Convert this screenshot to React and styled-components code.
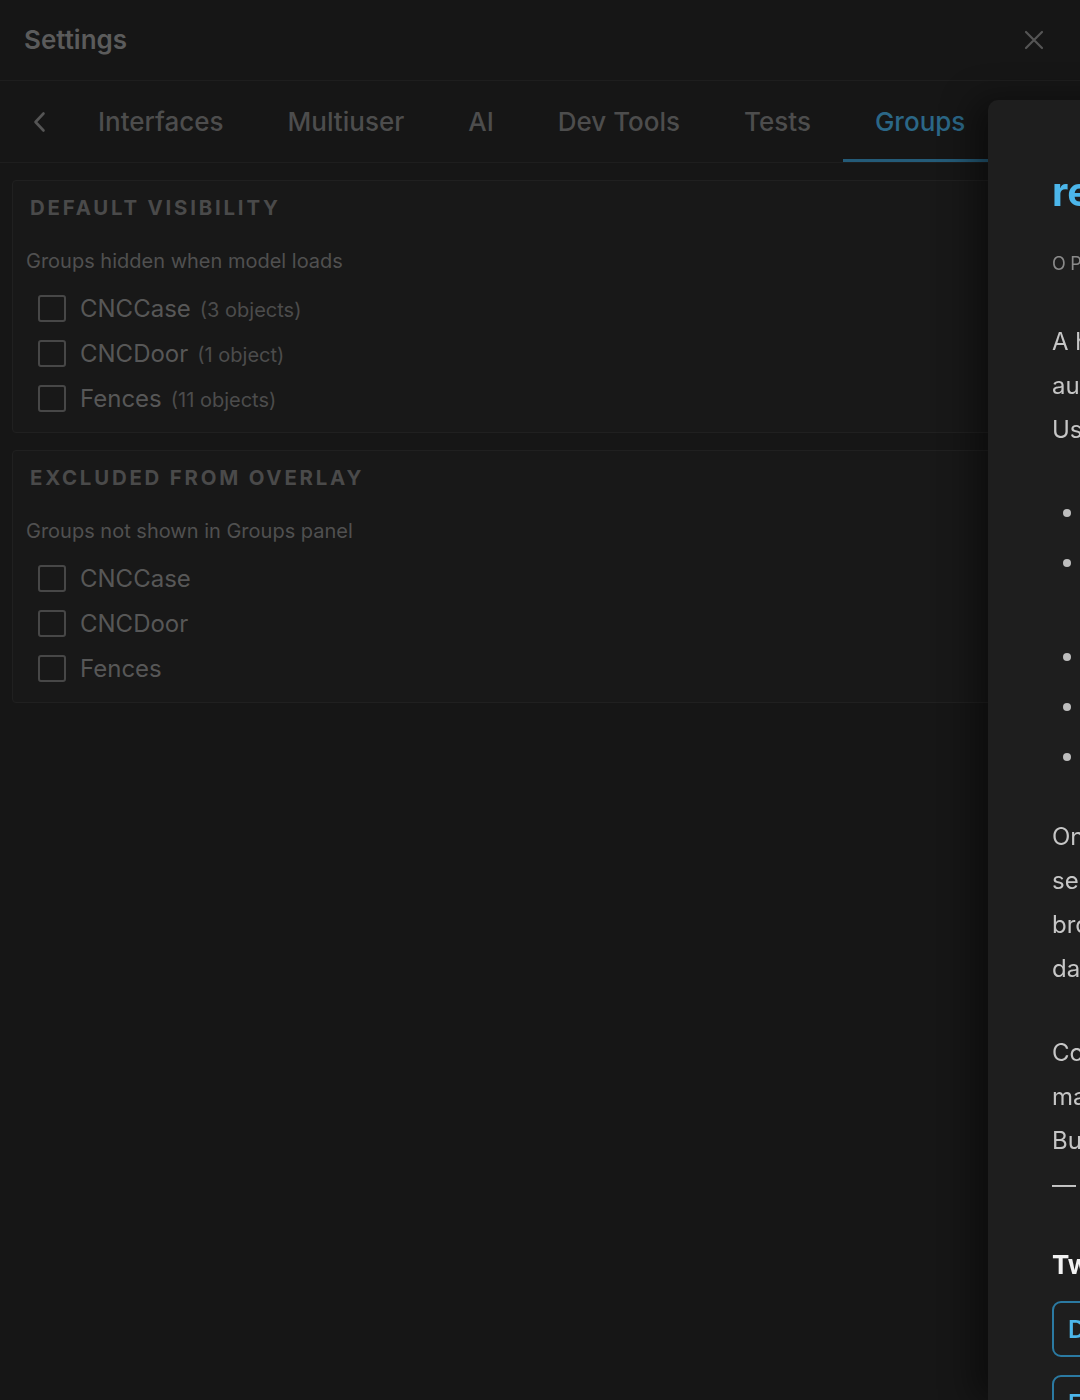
import React from "react";
import styled, { createGlobalStyle } from "styled-components";

const Global = createGlobalStyle`
  html, body { margin: 0; padding: 0; background: #161616; overflow: hidden; }
  body { font-family: Inter, "Noto Sans", "Liberation Sans", sans-serif; }
  * { box-sizing: border-box; }
`;

const Page = styled.div`
  width: 1080px;
  height: 1400px;
  background: #161616;
  display: flex;
  flex-direction: column;
`;

const Header = styled.header`
  height: 81px;
  border-bottom: 1px solid #1e1e1e;
  display: flex;
  align-items: center;
  justify-content: space-between;
  padding: 0 32px 0 24px;
`;

const Title = styled.h1`
  margin: 0;
  font-size: 26px;
  font-weight: 600;
  color: #5b5b5b;
  line-height: 1;
`;

const IconButton = styled.button`
  background: none;
  border: 0;
  padding: 0;
  display: flex;
  align-items: center;
  justify-content: ${(p) => (p.$start ? "flex-start" : "center")};
  padding-left: ${(p) => p.$pl || 0}px;
  align-self: center;
  width: ${(p) => p.$w || 28}px;
  height: 28px;
  color: #555;
`;

const TabBar = styled.nav`
  height: 82px;
  border-bottom: 1px solid #1e1e1e;
  display: flex;
  align-items: stretch;
  padding-left: 20px;
`;

const Tab = styled.div`
  display: flex;
  align-items: center;
  padding: 3px 32px 0;
  font-size: 26px;
  font-weight: 500;
  color: ${(p) => (p.$active ? "#2b6787" : "#4d4d4d")};
  border-bottom: 3px solid ${(p) => (p.$active ? "#245b78" : "transparent")};
`;

const Body = styled.main`
  display: flex;
  flex-direction: column;
  gap: 17px;
  padding: 17px 12px;
`;

const Card = styled.section`
  background: #181818;
  border: 1px solid #202020;
  border-radius: 4px;
  padding: 13px 14px 11px 13px;
`;

const CardTitle = styled.h2`
  margin: 0 0 0 4px;
  font-size: 20.4px;
  line-height: 28px;
  font-weight: 700;
  letter-spacing: 2.8px;
  text-transform: uppercase;
  color: #4a4a4a;
`;

const CardHint = styled.p`
  margin: 27px 0 13px;
  font-size: 20px;
  line-height: 24px;
  color: #505050;
`;

const Rows = styled.div`
  display: flex;
  flex-direction: column;
  padding-left: 12px;
`;

const Row = styled.label`
  display: flex;
  align-items: center;
  gap: 14px;
  height: 45px;
`;

const Box = styled.span`
  width: 28px;
  height: 27px;
  border: 2px solid #474747;
  border-radius: 3px;
  flex: none;
`;

const Name = styled.span`
  font-size: 24px;
  color: #575757;
`;

const Count = styled.span`
  font-size: 20px;
  color: #4c4c4c;
  margin-left: 9px;
`;

const Drawer = styled.aside`
  position: fixed;
  top: 100px;
  left: 988px;
  width: 640px;
  bottom: 0;
  background: #1e1e1e;
  border-top-left-radius: 10px;
  box-shadow: -14px 0 34px rgba(0, 0, 0, 0.45);
  padding: 70px 0 0 64px;
  overflow: hidden;
`;

const DrawerTitle = styled.h2`
  margin: 0;
  font-size: 40px;
  line-height: 44px;
  font-weight: 700;
  color: #4cb6ea;
`;

const Eyebrow = styled.div`
  margin-top: 38px;
  font-size: 18px;
  line-height: 24px;
  letter-spacing: 4.5px;
  text-transform: uppercase;
  color: #8a8a8a;
`;

const Para = styled.p`
  margin: ${(p) => p.$top || 40}px 0 0;
  font-size: 24px;
  line-height: 44px;
  color: #c6c6c6;
  white-space: nowrap;
`;

const List = styled.ul`
  margin: 38px 0 0;
  padding-left: 33px;
  font-size: 24px;
  line-height: 44px;
  color: #c6c6c6;
  white-space: nowrap;
  li { margin-bottom: 6px; }
  li::marker { color: #bdbdbd; }
`;

const SubHead = styled.h3`
  margin: 42px 0 0;
  font-size: 26px;
  line-height: 32px;
  font-weight: 700;
  color: #f2f2f2;
`;

const Buttons = styled.div`
  display: flex;
  flex-direction: column;
  gap: 18px;
  margin-top: 20px;
`;

const DrawerButton = styled.div`
  width: 420px;
  height: 56px;
  border: 2px solid #2b7aa2;
  border-radius: 9px;
  display: flex;
  align-items: center;
  padding-left: 14px;
  font-size: 24px;
  font-weight: 600;
  color: #4cb6ea;
`;

const groups = [
  { name: "CNCCase", count: "(3 objects)" },
  { name: "CNCDoor", count: "(1 object)" },
  { name: "Fences", count: "(11 objects)" },
];

const tabs = ["Interfaces", "Multiuser", "AI", "Dev Tools", "Tests", "Groups"];

export default function App() {
  return (
    <Page>
      <Global />
      <Header>
        <Title>Settings</Title>
        <IconButton aria-label="Close">
          <svg width="22" height="22" viewBox="0 0 22 22" fill="none" stroke="currentColor" strokeWidth="2.2" strokeLinecap="round">
            <path d="M3 3 L19 19 M19 3 L3 19" />
          </svg>
        </IconButton>
      </Header>
      <TabBar>
        <IconButton $w={46} $start $pl={12} aria-label="Back">
          <svg width="16" height="22" viewBox="0 0 16 22" fill="none" stroke="#555" strokeWidth="2.6" strokeLinecap="round" strokeLinejoin="round">
            <path d="M11.5 2.5 L3.5 11 L11.5 19.5" />
          </svg>
        </IconButton>
        {tabs.map((t) => (
          <Tab key={t} $active={t === "Groups"}>{t}</Tab>
        ))}
      </TabBar>
      <Body>
        <Card>
          <CardTitle>Default Visibility</CardTitle>
          <CardHint>Groups hidden when model loads</CardHint>
          <Rows>
            {groups.map((g) => (
              <Row key={g.name}>
                <Box />
                <span>
                  <Name>{g.name}</Name>
                  <Count>{g.count}</Count>
                </span>
              </Row>
            ))}
          </Rows>
        </Card>
        <Card>
          <CardTitle>Excluded from Overlay</CardTitle>
          <CardHint>Groups not shown in Groups panel</CardHint>
          <Rows>
            {groups.map((g) => (
              <Row key={g.name}>
                <Box />
                <Name>{g.name}</Name>
              </Row>
            ))}
          </Rows>
        </Card>
      </Body>
      <Drawer>
        <DrawerTitle>reference-groups</DrawerTitle>
        <Eyebrow>Optional settings</Eyebrow>
        <Para $top={44}>
          A helper that manages group visibility
          <br />
          automatically whenever a model loads.
          <br />
          Use it to keep the viewport uncluttered.
        </Para>
        <List>
          <li>Hide bulky enclosures on load</li>
          <li>Keep doors and covers out of the way
            <br />while inspecting the internals</li>
          <li>Remove fences from the overlay</li>
          <li>Persist choices per project</li>
          <li>Sync with connected clients</li>
        </List>
        <Para $top={37}>
          On load, the hidden groups are set
          <br />
          selected off before the first frame is
          <br />
          broadcast to every connected client and
          <br />
          data panel.
        </Para>
        <Para>
          Configure the lists here and the
          <br />
          matching objects update instantly.
          <br />
          But excluded groups stay selectable
          <br />
          — they are only hidden from the panel.
        </Para>
        <SubHead>Two modes</SubHead>
        <Buttons>
          <DrawerButton>Default visibility</DrawerButton>
          <DrawerButton>Excluded from overlay</DrawerButton>
        </Buttons>
      </Drawer>
    </Page>
  );
}
